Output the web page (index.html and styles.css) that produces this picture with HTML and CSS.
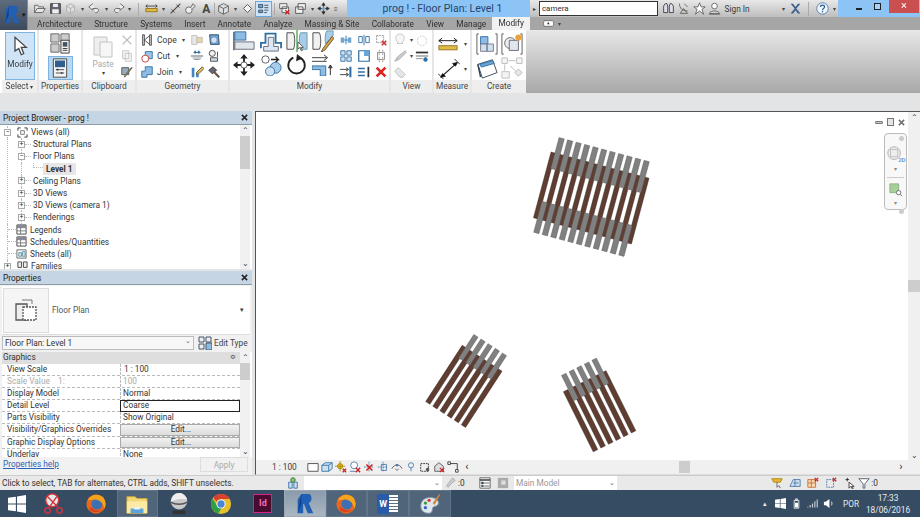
FILE: index.html
```html
<!DOCTYPE html>
<html lang="en">
<head>
<meta charset="utf-8">
<title>prog ! - Floor Plan: Level 1</title>
<link rel="stylesheet" href="styles.css">
</head>
<body>
<svg class="defs" width="0" height="0" aria-hidden="true">
<defs>
<symbol id="open" viewBox="0 0 16 16"><path d="M2 13V4h4l1 2h6v2M2 13l3-5h10l-3 5z" fill="#e6e6e6" stroke="#555"/></symbol>
<symbol id="save" viewBox="0 0 16 16"><path d="M2 2h12v12H2z" fill="#667" stroke="#333"/><path d="M5 2h6v4H5zM4 9h8v5H4z" fill="#eee"/></symbol>
<symbol id="sync" viewBox="0 0 16 16"><path d="M3 5l5-3 5 3v6l-5 3-5-3z" fill="#ddd" stroke="#aaa"/><path d="M3 5l5 3 5-3M8 8v6" fill="none" stroke="#aaa"/></symbol>
<symbol id="undo" viewBox="0 0 16 16"><path d="M6 2L1 6l5 4V8h4c2 0 3 1 3 2s-1 3-3 3h-1" fill="#eee" stroke="#555"/></symbol>
<symbol id="redo" viewBox="0 0 16 16"><path d="M10 2l5 4-5 4V8H6c-2 0-3 1-3 2s1 3 3 3h1" fill="#eee" stroke="#555"/></symbol>
<symbol id="dimq" viewBox="0 0 16 16"><path d="M1 5h14M3 3l-2 2 2 2M13 3l2 2-2 2" fill="none" stroke="#333"/><path d="M1 8h14v4H1z" fill="#e2b93b" stroke="#8a6d1a"/></symbol>
<symbol id="alignq" viewBox="0 0 16 16"><path d="M2 14L14 2" stroke="#444" stroke-width="1.4"/><path d="M3 9l4 4M9 3l4 4" stroke="#444"/></symbol>
<symbol id="tag" viewBox="0 0 16 16"><circle cx="6" cy="10" r="4" fill="#eee" stroke="#555"/><path d="M8 7l3-5 3 3-4 4" fill="#ddd" stroke="#555"/></symbol>
<symbol id="home" viewBox="0 0 16 16"><path d="M2 5l6-3 6 3v7l-6 3-6-3z" fill="#ddd" stroke="#555"/><path d="M2 5l6 3 6-3M8 8v7" fill="none" stroke="#555"/></symbol>
<symbol id="dia" viewBox="0 0 16 16"><path d="M8 3l5 5-5 5-5-5z" fill="#f3f3f3" stroke="#444"/></symbol>
<symbol id="thin" viewBox="0 0 16 16"><path d="M2 3h5v4H2zM2 10h5v3H2z" fill="#6aa5d6" stroke="#345"/><path d="M9 4h5M9 7h5M9 10h5M9 13h3" stroke="#333"/></symbol>
<symbol id="closeh" viewBox="0 0 16 16"><path d="M2 2h9v6H2zM5 6h8v7H5z" fill="#eee" stroke="#555"/><path d="M9 10l5 5m0-5l-5 5" stroke="#c22" stroke-width="1.6"/></symbol>
<symbol id="swin" viewBox="0 0 16 16"><path d="M5 2h9v7H5zM2 6h9v8H2z" fill="#f2f2f2" stroke="#444"/></symbol>
<symbol id="moveq" viewBox="0 0 16 16"><path d="M8 1v14M1 8h14M8 1L6 4h4zM8 15l-2-3h4zM1 8l3-2v4zM15 8l-3-2v4z" fill="#333" stroke="#333"/><circle cx="8" cy="8" r="2" fill="#6aa5d6"/></symbol>
<symbol id="arrow" viewBox="0 0 16 16"><path d="M4 1v11l3-2 2 5 2-1-2-5h4z" fill="#fff" stroke="#444"/></symbol>
<symbol id="props1" viewBox="0 0 24 24"><path d="M2 2h9v9H2zM13 2h9v9h-9zM2 13h9v9H2z" fill="#ccc" stroke="#666"/><path d="M13 9h9v14h-9z" fill="#f4f4f4" stroke="#333"/><path d="M15 11h5v5h-5z" fill="#456"/><path d="M15 18h5M15 20h5" stroke="#333"/></symbol>
<symbol id="props2" viewBox="0 0 24 24"><path d="M4 1h16v22H4z" fill="#f4f4f4" stroke="#333"/><path d="M6 3h12v8H6z" fill="#2f5f8f"/><path d="M7 14h10M7 18h10" stroke="#333"/><path d="M9 13v2M14 17v2" stroke="#333" stroke-width="2"/></symbol>
<symbol id="paste" viewBox="0 0 24 24"><path d="M3 3h13v18H3z" fill="#eee" stroke="#c4c4c4"/><path d="M9 8h12v15H9z" fill="#f6f6f6" stroke="#c4c4c4"/></symbol>
<symbol id="scis" viewBox="0 0 16 16"><path d="M3 3l10 10M13 3L3 13" stroke="#bbb" stroke-width="1.6"/></symbol>
<symbol id="copyg" viewBox="0 0 16 16"><path d="M3 2h7v9H3zM6 5h7v9H6z" fill="#f4f4f4" stroke="#c4c4c4"/></symbol>
<symbol id="match" viewBox="0 0 16 16"><path d="M2 3h8v8H2z" fill="#9ab" stroke="#555"/><path d="M14 3l-7 9-2 2 1-3 7-8z" fill="#cb4" stroke="#555"/></symbol>
<symbol id="cope" viewBox="0 0 16 16"><path d="M3 2h2v12H3zM11 2h2v12h-2z" fill="#ddd" stroke="#444"/><path d="M5 8l6-5M5 8l6 5" stroke="#444"/></symbol>
<symbol id="cut" viewBox="0 0 16 16"><path d="M6 3h8v8H6z" fill="#9cc4e6" stroke="#2f6fa5"/><circle cx="6" cy="11" r="4" fill="#fff" stroke="#b33"/></symbol>
<symbol id="join" viewBox="0 0 16 16"><path d="M6 2h8v9H8v3H2V7h4z" fill="#8fbce2" stroke="#2f6fa5"/></symbol>
<symbol id="g2" viewBox="0 0 16 16"><path d="M2 3h6v10H2z" fill="#e8e8e8" stroke="#bbb"/><path d="M8 5h6v6H8z" fill="#e3d9a8" stroke="#bbb"/></symbol>
<symbol id="g3" viewBox="0 0 16 16"><path d="M3 2h10l1 11H4z" fill="#6aa5d6" stroke="#345"/><circle cx="8" cy="8" r="3" fill="#dde"/></symbol>
<symbol id="g4" viewBox="0 0 16 16"><path d="M1 8h14M4 4h8M5 12h6" stroke="#456"/><path d="M6 2v3M10 2v3" stroke="#2f6fa5" stroke-width="2"/><path d="M3 9h10v3H3z" fill="#ccc"/></symbol>
<symbol id="g5" viewBox="0 0 16 16"><circle cx="6" cy="5" r="3.5" fill="#eee" stroke="#444"/><path d="M4 10h8v4H4z" fill="#cde" stroke="#444"/><path d="M12 3v6" stroke="#444"/></symbol>
<symbol id="g6" viewBox="0 0 16 16"><path d="M2 3h3v11H2zM7 8h3v6H7z" fill="#3f86c2"/><path d="M14 2L8 8l-1 3 3-1 6-6z" fill="#db5" stroke="#654"/></symbol>
<symbol id="g7" viewBox="0 0 16 16"><path d="M2 6l5-4 4 4-5 4z" fill="#667" stroke="#333"/><path d="M8 8l6 6" stroke="#654" stroke-width="2.4"/></symbol>
<symbol id="malign" viewBox="0 0 24 24"><path d="M1 2v20" stroke="#444" stroke-width="1.4"/><path d="M2 2h12v9H2z" fill="#8fbce2" stroke="#2f6fa5"/><path d="M2 13h21v8H2z" fill="#dfe6ec" stroke="#667"/></symbol>
<symbol id="moff" viewBox="0 0 24 24"><path d="M1 20v-6h5V4h11v10h6v6" fill="none" stroke="#2f6fa5" stroke-width="2"/><path d="M4 23v-5h5V8h6v10h5v5z" fill="#dbe8f3" stroke="#667"/></symbol>
<symbol id="mmir1" viewBox="0 0 24 24"><path d="M1 3h7c2 3 2 15 0 18H1z" fill="#f1f1f1" stroke="#444"/><path d="M23 3h-7c-2 3-2 15 0 18h7z" fill="#a8cbe8" stroke="#69a"/><path d="M12 0v24" stroke="#3a9a3a" stroke-width="1.3"/><path d="M13 13v8l2-2 2 4 1-1-2-3h3z" fill="#fff" stroke="#555"/></symbol>
<symbol id="mmir2" viewBox="0 0 24 24"><path d="M1 3h7c2 3 2 15 0 18H1z" fill="#f1f1f1" stroke="#444"/><path d="M23 1h-7c-2 3-2 10-1 14l8-9z" fill="#a8cbe8" stroke="#69a"/><path d="M22 7L12 20l-2 4 4-2L24 9z" fill="#d9a63a" stroke="#654"/></symbol>
<symbol id="mmove" viewBox="0 0 24 24"><path d="M12 2v20M2 12h20" stroke="#222" stroke-width="2"/><path d="M12 0L8 5h8zM12 24l-4-5h8zM0 12l5-4v8zM24 12l-5-4v8z" fill="#222"/><circle cx="12" cy="12" r="3.4" fill="#fff" stroke="#555"/></symbol>
<symbol id="mcopy" viewBox="0 0 24 24"><circle cx="6" cy="6" r="4" fill="#fff" stroke="#556"/><path d="M12 6h8l-3-3m3 3l-3 3" fill="none" stroke="#222" stroke-width="1.4"/><circle cx="17" cy="15" r="6" fill="#a8cbe8" stroke="#2f6fa5"/><circle cx="11" cy="19" r="5" fill="#cfe1f0" stroke="#2f6fa5"/></symbol>
<symbol id="mrot" viewBox="0 0 24 24"><path d="M15 4a9 9 0 1 1-7 0" fill="none" stroke="#222" stroke-width="2"/><path d="M12 0l6 5-7 3z" fill="#222"/></symbol>
<symbol id="mtrim" viewBox="0 0 24 24"><path d="M0 4h16M0 8h16M13 1l4 3-4 3" fill="none" stroke="#333"/><path d="M0 13h15v11H9V17H0z" fill="#8fbce2" stroke="#2f6fa5"/><path d="M20 23V12l-2 3h4l-2-3" stroke="#222" fill="none"/></symbol>
<symbol id="sm1" viewBox="0 0 16 16"><path d="M2 5h4v6H2zM10 5h4v6h-4z" fill="#6aa5d6"/><path d="M8 3v10M6 8h4" stroke="#2f6fa5"/></symbol>
<symbol id="sm2" viewBox="0 0 16 16"><path d="M2 4h4v7H2zM10 4h4v7h-4z" fill="#fff" stroke="#2f6fa5"/><path d="M8 2v12" stroke="#2f6fa5"/></symbol>
<symbol id="sm3" viewBox="0 0 16 16"><path d="M3 3h8v8H3z" fill="none" stroke="#888" stroke-dasharray="2 1"/><path d="M9 9l5 5m0-5l-5 5" stroke="#c33" stroke-width="1.8"/></symbol>
<symbol id="sm4" viewBox="0 0 16 16"><path d="M2 2h5v5H2zM9 2h5v5H9zM2 9h5v5H2zM9 9h5v5H9z" fill="#cfe1f0" stroke="#2f6fa5"/></symbol>
<symbol id="sm5" viewBox="0 0 16 16"><path d="M2 2h12v12H2z" fill="#fff" stroke="#2f6fa5" stroke-width="1.4"/><path d="M8 2h6v6H8z" fill="#6aa5d6"/></symbol>
<symbol id="sm6" viewBox="0 0 16 16"><path d="M4 4h8v8H4z" fill="none" stroke="#888"/><path d="M6 1v14M10 1v14" stroke="#888" stroke-dasharray="2 2"/></symbol>
<symbol id="sm7" viewBox="0 0 16 16"><path d="M1 5h9M1 11h9M8 3l3 2-3 2M8 9l3 2-3 2" fill="none" stroke="#333"/><path d="M13 2v12" stroke="#2f6fa5" stroke-width="2.4"/></symbol>
<symbol id="sm8" viewBox="0 0 16 16"><path d="M1 4h8M1 8h8M1 12h8" stroke="#2f6fa5" stroke-width="1.6"/><path d="M13 2v12" stroke="#333" stroke-width="2"/></symbol>
<symbol id="sm9" viewBox="0 0 16 16"><path d="M3 3l10 10m0-10L3 13" stroke="#d22" stroke-width="3"/></symbol>
<symbol id="bulb" viewBox="0 0 16 16"><path d="M8 1a5 5 0 0 0-3 9v2h6v-2a5 5 0 0 0-3-9z" fill="#f5f5f5" stroke="#c4c4c4"/></symbol>
<symbol id="cube" viewBox="0 0 16 16"><path d="M3 6l5-3 5 3v6l-5 3-5-3z" fill="none" stroke="#ccc" stroke-dasharray="2 1"/></symbol>
<symbol id="brush" viewBox="0 0 16 16"><path d="M14 2L5 9l-3 5 5-2 8-8z" fill="#ccc" stroke="#aaa"/></symbol>
<symbol id="lines" viewBox="0 0 16 16"><path d="M1 4h14" stroke="#333" stroke-width="2"/><path d="M1 8h14" stroke="#555"/><path d="M1 11h8" stroke="#888"/><circle cx="12" cy="12" r="2.5" fill="#2f6fa5"/></symbol>
<symbol id="eraser" viewBox="0 0 16 16"><path d="M2 7l4-4 8 8-3 3H8z" fill="#e6e6e6" stroke="#bbb"/></symbol>
<symbol id="ruler" viewBox="0 0 24 16"><path d="M1 4h22M5 1L1 4l4 3M19 1l4 3-4 3" fill="none" stroke="#222" stroke-width="1.2"/><path d="M1 10h22v5H1z" fill="#e0bb45" stroke="#8a6d1a"/></symbol>
<symbol id="ali" viewBox="0 0 24 24"><path d="M3 21L21 5" stroke="#222" stroke-width="1.2"/><path d="M0 17l6 6M18 1l6 6M3 21l5-1-3-3zM21 5l-5 1 3 3z" stroke="#222"/></symbol>
<symbol id="cr1" viewBox="0 0 24 24"><path d="M3 1H1v22h2M21 1h2v22h-2" fill="none" stroke="#555"/><path d="M5 4h8v8H5z" fill="#8fbce2" stroke="#2f6fa5"/><path d="M5 12h7v8H5zM12 12h7v8h-7z" fill="#cfe1f0" stroke="#778"/></symbol>
<symbol id="cr2" viewBox="0 0 24 24"><path d="M3 1H1v22h2M21 1h2v22h-2" fill="none" stroke="#555"/><circle cx="10" cy="11" r="6" fill="#eee" stroke="#666"/><path d="M9 8h10v11H9z" fill="#dfe6ec" stroke="#667"/><circle cx="19" cy="5" r="3.4" fill="#e8a33a"/></symbol>
<symbol id="cr3" viewBox="0 0 24 24"><path d="M2 8l16-5 5 14-16 6z" fill="#fff" stroke="#345"/><path d="M4 8l14-4 2 3-14 4z" fill="#6aa5d6" stroke="#2f6fa5"/><path d="M2 8l3 14" stroke="#345" stroke-width="1.6"/></symbol>
<symbol id="cr4" viewBox="0 0 24 24"><path d="M1 1h6v6H1zM17 1h6v6h-6zM1 16h8v7H1z" fill="#f5f5f5" stroke="#bbb"/><path d="M19 13l4 4-4 4-4-4z" fill="#e6e6e6" stroke="#bbb"/><path d="M8 4h8M4 8v7M10 10l6 5" stroke="#bbb"/></symbol>
<symbol id="x" viewBox="0 0 8 8"><path d="M1 1l6 6M7 1L1 7" stroke="#222" stroke-width="1.7"/></symbol>
<symbol id="views" viewBox="0 0 12 12"><path d="M1 4V1h3M8 1h3v3M11 8v3H8M4 11H1V8" fill="none" stroke="#333"/><path d="M4 4h4v4H4z" fill="#fff" stroke="#777"/></symbol>
<symbol id="tbl" viewBox="0 0 12 12"><path d="M1 1h10v10H1z" fill="#fff" stroke="#444"/><path d="M1 4h10M1 7.5h10M5 4v7" stroke="#777"/><path d="M1 1h10v3H1z" fill="#889"/></symbol>
<symbol id="sheet" viewBox="0 0 12 12"><path d="M1 2h10v9H1z" fill="#fff" stroke="#666"/><path d="M3 5h3v4H3zM7 4h3v5H7z" fill="#dde" stroke="#69a"/></symbol>
<symbol id="fam" viewBox="0 0 12 12"><path d="M1 1h4v6H1zM7 1h4v6H7z" fill="#eee" stroke="#444"/></symbol>
<symbol id="fp" viewBox="0 0 24 24"><path d="M2 6h11v16H2z" fill="#eee" stroke="#555" stroke-width="1.3"/><path d="M8 2h10v4" fill="none" stroke="#777"/><path d="M9 9h13v13H9z" fill="#fff" stroke="#555" stroke-width="1.3" stroke-dasharray="2 1"/></symbol>
<symbol id="edit" viewBox="0 0 14 14"><path d="M1 1h5v5H1zM8 1h5v5H8zM1 8h5v5H1z" fill="#eee" stroke="#456"/><path d="M8 7h6v7H8z" fill="#8fbce2" stroke="#456"/></symbol>
<symbol id="wheel" viewBox="0 0 20 20"><circle cx="9" cy="9" r="7" fill="#eee" stroke="#aaa"/><path d="M5 5h8v8H5z" fill="none" stroke="#bbb"/></symbol>
<symbol id="zoomg" viewBox="0 0 16 16"><path d="M1 1h10v10H1z" fill="#a7cf9a" stroke="#8ab07e"/><circle cx="11" cy="11" r="2.5" fill="#fff" stroke="#666"/><path d="M13 13l2 2" stroke="#666"/></symbol>
<symbol id="v1" viewBox="0 0 14 14"><path d="M1 3h12v9H1z" fill="#fff" stroke="#444"/></symbol>
<symbol id="v2" viewBox="0 0 14 14"><path d="M1 5l4-3h8v7l-4 3H1z" fill="#cfe1f0" stroke="#2f6fa5"/><path d="M1 5h8v7M9 5l4-3" fill="none" stroke="#2f6fa5"/></symbol>
<symbol id="v3" viewBox="0 0 14 14"><circle cx="6" cy="6" r="3" fill="#f0c030" stroke="#a80"/><path d="M6 0v12M0 6h12" stroke="#a80"/><path d="M9 9l4 4m0-4l-4 4" stroke="#c22" stroke-width="1.6"/></symbol>
<symbol id="v4" viewBox="0 0 14 14"><circle cx="6" cy="5" r="4" fill="#fff" stroke="#47a"/><path d="M1 12h7" stroke="#47a"/><path d="M8 8l5 5m0-5l-5 5" stroke="#c22" stroke-width="1.6"/></symbol>
<symbol id="v5" viewBox="0 0 14 14"><path d="M1 7h12M7 1v12" stroke="#47a" stroke-dasharray="2 1"/><path d="M4 4l7 7m0-7l-7 7" stroke="#c22" stroke-width="1.8"/></symbol>
<symbol id="v6" viewBox="0 0 14 14"><path d="M1 7h12M7 1v12" stroke="#47a" stroke-dasharray="2 1"/><path d="M5 4h6v7H5z" fill="none" stroke="#47a"/></symbol>
<symbol id="v7" viewBox="0 0 14 14"><path d="M1 9c3-6 9-6 12 0M5 9l2 2 2-2" fill="none" stroke="#555"/><circle cx="7" cy="5" r="1.4" fill="#47a"/></symbol>
<symbol id="v8" viewBox="0 0 14 14"><circle cx="7" cy="5" r="3" fill="none" stroke="#47a"/><path d="M7 8v4" stroke="#47a"/></symbol>
<symbol id="v9" viewBox="0 0 14 14"><path d="M2 3h9v9H2z" fill="none" stroke="#222" stroke-dasharray="2 1"/><circle cx="10" cy="10" r="2" fill="#555"/></symbol>
<symbol id="v10" viewBox="0 0 14 14"><path d="M2 6l5-4 5 4v6H2z" fill="#ddd" stroke="#555"/><path d="M8 8l5 5m0-5l-5 5" stroke="#c22" stroke-width="1.4"/></symbol>
<symbol id="v11" viewBox="0 0 14 14"><path d="M2 3h10v10" fill="none" stroke="#333"/><path d="M1 1h3v3H1zM10 10h3v3h-3z" fill="#fff" stroke="#333"/></symbol>
<symbol id="work" viewBox="0 0 14 14"><path d="M2 6h4v7H2zM8 6h4v7H8z" fill="#cfe1f0" stroke="#2f6fa5"/><circle cx="7" cy="3.5" r="2.6" fill="#8c6" stroke="#364"/></symbol>
<symbol id="pin" viewBox="0 0 14 14"><path d="M10 1l3 3-5 4-3 4-2-2 3-4zM3 12l2-2" fill="#ccc" stroke="#aaa"/></symbol>
<symbol id="dset" viewBox="0 0 14 14"><path d="M1 1h12v12H1z" fill="#fff" stroke="#555"/><path d="M1 3.500h12" stroke="#555" stroke-width="2"/><path d="M3 6h2v2H3zM3 10h2v1H3zM6 7h6M6 10.500h6" stroke="#456"/></symbol>
<symbol id="dset2" viewBox="0 0 14 14"><path d="M1 1h12v12H1z" fill="#aaa"/><path d="M5 4h5v5H5z" fill="#ddd"/></symbol>
<symbol id="f1" viewBox="0 0 14 14"><path d="M1 2h12l-2 4H3z" fill="#e8b53a" stroke="#a80"/><path d="M7 6v6l2-2 2 3" fill="#fff" stroke="#555"/></symbol>
<symbol id="f2" viewBox="0 0 14 14"><path d="M1 11l4-8h8v8z" fill="#cfe1f0" stroke="#47a"/><path d="M5 7h6M7 3v8" stroke="#47a"/></symbol>
<symbol id="f3" viewBox="0 0 14 14"><path d="M1 3h9v9H1z" fill="#f3dcb0" stroke="#c63"/><path d="M1 7h9M5 3v9" stroke="#c63"/><path d="M9 1l4 4m0-4l-4 4" stroke="#c22" stroke-width="1.5"/></symbol>
<symbol id="f4" viewBox="0 0 14 14"><path d="M2 3h8v9H2z" fill="none" stroke="#47a" stroke-dasharray="2 1"/><path d="M9 1l4 4m0-4l-4 4" stroke="#c22" stroke-width="1.5"/></symbol>
<symbol id="f5" viewBox="0 0 14 14"><path d="M3 3h4M5 1v4" stroke="#222"/><path d="M7 6v7l2-2 2 3 1-1-2-2h3z" fill="#fff" stroke="#333"/></symbol>
<symbol id="f6" viewBox="0 0 14 14"><path d="M1 2h12L8 8v5H6V8z" fill="#fff" stroke="#456"/></symbol>
<symbol id="win" viewBox="0 0 16 16"><path d="M0 2.500L7 1.500v6H0zM8 1.300L16 0v7.500H8zM0 8.500h7v6l-7-1zM8 8.500h8V16l-8-1.300z" fill="#fff"/></symbol>
<symbol id="snip" viewBox="0 0 24 24"><circle cx="10" cy="8" r="7" fill="#e8e8e8" stroke="#d33" stroke-width="1.4"/><path d="M4 3l13 13M15 4L6 17" stroke="#c34" stroke-width="1.5"/><circle cx="18" cy="19" r="3" fill="none" stroke="#c34" stroke-width="1.6"/><circle cx="5" cy="19" r="3" fill="none" stroke="#c34" stroke-width="1.6"/></symbol>
<symbol id="ff" viewBox="0 0 24 24"><circle cx="12" cy="12" r="10.500" fill="#e8671f"/><circle cx="13" cy="12" r="6" fill="#3d6fb4"/><path d="M3 8c3-7 12-8 17-3 3 4 3 9 1 12-1-6-5-10-10-10-3 0-6 1-8 1z" fill="#f7a41d"/><path d="M5 18c3 4 10 4 14 0-4 2-10 1-13-3z" fill="#d8421c"/></symbol>
<symbol id="expl" viewBox="0 0 24 24"><path d="M1 4h9l2 2h11v16H1z" fill="#f3d774" stroke="#c9a53a"/><path d="M1 9h22v13H1z" fill="#fbe9a4"/><path d="M5 17h14v5H5z" fill="#5ba3d9"/><path d="M9 15h6v3H9z" fill="#e9f3fb"/></symbol>
<symbol id="ball" viewBox="0 0 24 24"><circle cx="12" cy="9" r="9" fill="#c9c9c9"/><path d="M3 10c5-4 13-4 18-3-2-5-6-7-9-7C7 0 4 4 3 10z" fill="#eee"/><path d="M3 10c5 3 13 3 18 0" fill="none" stroke="#555" stroke-width="1.6"/><path d="M5 19h14v4H5z" fill="#333"/></symbol>
<symbol id="chrome" viewBox="0 0 24 24"><circle cx="12" cy="12" r="11" fill="#e8c02c"/><path d="M12 1a11 11 0 0 1 9.500 5.500H12a5.500 5.500 0 0 0-5 3L3.500 5A11 11 0 0 1 12 1z" fill="#d9402f"/><path d="M2.800 6a11 11 0 0 0 6 16.500l4-6.500a5.500 5.500 0 0 1-5.500-3z" fill="#2f9e47"/><circle cx="12" cy="12" r="5" fill="#fff"/><circle cx="12" cy="12" r="4" fill="#4a86d8"/></symbol>
<symbol id="revit" viewBox="0 0 24 24"><path d="M8 1h9c3 3 3 8-1 10l5 11h-6l-4-10h-1v10H4V7z" fill="#1f5fb4"/><path d="M4 22l4-21v11z" fill="#123f82"/></symbol>
<symbol id="bino" viewBox="0 0 16 16"><path d="M2 5l2-3h2l1 3v8H2zM14 5l-2-3h-2L9 5v8h5z" fill="#dde" stroke="#333"/></symbol>
<symbol id="paint" viewBox="0 0 24 24"><path d="M2 14c0-6 5-9 10-9 6 0 10 3 9 7-1 3-5 2-6 4-1 3 0 6-5 6-5 0-8-3-8-8z" fill="#dfe6ec" stroke="#8a9aa8"/><circle cx="7" cy="11" r="1.800" fill="#3a9a3a"/><circle cx="11" cy="8" r="1.800" fill="#d33"/><circle cx="7" cy="16" r="1.800" fill="#36c"/><path d="M22 1l-7 10 2 2 6-11z" fill="#c9883a"/></symbol>
<symbol id="sat" viewBox="0 0 16 16"><path d="M3 2c0 6 4 9 10 9M4 14h9L8 8z" fill="none" stroke="#555"/><path d="M9 2l4 4" stroke="#555"/></symbol>
<symbol id="star" viewBox="0 0 16 16"><path d="M8 1l2 5h5l-4 3 2 6-5-4-5 4 2-6-4-3h5z" fill="#fff" stroke="#555"/></symbol>
<symbol id="user" viewBox="0 0 16 16"><circle cx="8" cy="5" r="3.500" fill="#fff" stroke="#555"/><path d="M2 14c1-4 11-4 12 0zM1 15h14" fill="#ddd" stroke="#555"/></symbol>
<symbol id="xch" viewBox="0 0 16 16"><path d="M2 2l5 6-5 6h3l3-4 3 4h3L9 8l5-6h-3L8 6 5 2z" fill="#3a5f8f"/></symbol>
<symbol id="help" viewBox="0 0 16 16"><circle cx="8" cy="8" r="7" fill="#f3f7fb" stroke="#3a6fa5"/><path d="M5.500 6c0-3 5-3 5 0 0 2-2.500 2-2.500 4" fill="none" stroke="#2a5f95" stroke-width="1.5"/><circle cx="8" cy="12" r="1" fill="#2a5f95"/></symbol>
<symbol id="ribctl" viewBox="0 0 16 10"><path d="M1 1h12c2 0 2 8 0 8H1c-1-2-1-6 0-8z" fill="#fff" stroke="#555"/><path d="M5 6l2-3 2 3z" fill="#333"/></symbol>
<symbol id="batt" viewBox="0 0 12 14"><path d="M3 3h6v10H3zM5 1h2v2H5z" fill="none" stroke="#fff"/><path d="M4 6h4v6H4z" fill="#fff"/></symbol>
<symbol id="sig" viewBox="0 0 14 12"><path d="M1 11v-1M4 11V8M7 11V6M10 11V3M13 11V1" stroke="#fff" stroke-opacity=".75" stroke-width="1.400"/></symbol>
<symbol id="spk" viewBox="0 0 12 12"><path d="M1 4h2l4-3v10L3 8H1z" fill="#fff"/><path d="M9 4c1 1 1 3 0 4" fill="none" stroke="#fff"/></symbol>
</defs>
</svg>

<div class="app">
  <header class="head">
    <div class="logo"><svg class="i-logo"><use href="#revit"/></svg><span class="logo-dd">▾</span></div>
    <div class="head-main">
      <div class="top">
        <div class="qat">
          <svg class="q"><use href="#open"/></svg>
          <svg class="q"><use href="#save"/></svg>
          <svg class="q"><use href="#sync"/></svg>
          <span class="dd">▾</span>
          <svg class="q"><use href="#undo"/></svg>
          <span class="dd">▾</span>
          <svg class="q"><use href="#redo"/></svg>
          <span class="dd">▾</span>
          <i class="qsep qsep-a"></i>
          <svg class="q"><use href="#dimq"/></svg>
          <span class="dd">▾</span>
          <svg class="q"><use href="#alignq"/></svg>
          <svg class="q"><use href="#tag"/></svg>
          <span class="qa-a">A</span>
          <i class="qsep qsep-b"></i>
          <svg class="q"><use href="#home"/></svg>
          <span class="dd">▾</span>
          <svg class="q"><use href="#dia"/></svg>
          <span class="q-on"><svg class="q"><use href="#thin"/></svg></span>
          <i class="qsep"></i>
          <svg class="q"><use href="#closeh"/></svg>
          <svg class="q"><use href="#swin"/></svg>
          <span class="dd">▾</span>
          <svg class="q"><use href="#moveq"/></svg>
          <span class="dd">≡</span>
        </div>
        <div class="title">prog ! - Floor Plan: Level 1</div>
        <div class="infobar">
          <span class="ib-arrow">▸</span>
          <span class="search">camera</span>
          <svg class="q"><use href="#bino"/></svg>
          <svg class="q"><use href="#sat"/></svg>
          <svg class="q"><use href="#star"/></svg>
          <svg class="q"><use href="#user"/></svg>
          <span class="signin">Sign In</span>
          <span class="dd">▾</span>
          <svg class="q"><use href="#xch"/></svg>
          <i class="ib-sep"></i>
          <svg class="q"><use href="#help"/></svg>
          <span class="dd">▾</span>
        </div>
        <div class="winctl">
          <span class="w-min"></span>
          <span class="w-max"></span>
          <span class="w-close">×</span>
        </div>
      </div>
      <nav class="tabs">
        <span>Architecture</span><span>Structure</span><span>Systems</span><span>Insert</span><span>Annotate</span><span>Analyze</span><span>Massing &amp; Site</span><span>Collaborate</span><span>View</span><span>Manage</span><span class="tab-on">Modify</span>
        <svg class="ribctl"><use href="#ribctl"/></svg><span class="dd">▾</span>
      </nav>
    </div>
  </header>

  <section class="ribbon">
    <div class="panel p-select">
      <div class="pbody"><div class="modify-btn"><svg class="i20"><use href="#arrow"/></svg><span>Modify</span></div></div>
      <div class="plabel">Select <span class="dd">▾</span></div>
    </div>
    <div class="panel p-props">
      <div class="pbody col-c">
        <svg class="i22"><use href="#props1"/></svg>
        <span class="props-on"><svg class="i20"><use href="#props2"/></svg></span>
      </div>
      <div class="plabel">Properties</div>
    </div>
    <div class="panel p-clip">
      <div class="pbody clip">
        <div class="paste"><svg class="i24"><use href="#paste"/></svg><span>Paste</span><span class="dd">▾</span></div>
        <div class="stack">
          <svg class="i14"><use href="#scis"/></svg>
          <svg class="i14"><use href="#copyg"/></svg>
          <svg class="i14"><use href="#match"/></svg>
        </div>
      </div>
      <div class="plabel">Clipboard</div>
    </div>
    <div class="panel p-geo">
      <div class="pbody geo">
        <div class="ln"><svg class="i14"><use href="#cope"/></svg>Cope <span class="dd">▾</span></div>
        <svg class="i14"><use href="#g2"/></svg>
        <svg class="i14"><use href="#g3"/></svg>
        <div class="ln"><svg class="i14"><use href="#cut"/></svg>Cut <span class="dd">▾</span></div>
        <svg class="i14"><use href="#g4"/></svg>
        <svg class="i14"><use href="#g5"/></svg>
        <div class="ln"><svg class="i14"><use href="#join"/></svg>Join <span class="dd">▾</span></div>
        <svg class="i14"><use href="#g6"/></svg>
        <svg class="i14"><use href="#g7"/></svg>
      </div>
      <div class="plabel">Geometry</div>
    </div>
    <div class="panel p-mod">
      <div class="pbody mod">
        <div class="mod-big">
          <svg class="i22"><use href="#malign"/></svg>
          <svg class="i22"><use href="#moff"/></svg>
          <svg class="i22"><use href="#mmir1"/></svg>
          <svg class="i22"><use href="#mmir2"/></svg>
          <svg class="i22"><use href="#mmove"/></svg>
          <svg class="i22"><use href="#mcopy"/></svg>
          <svg class="i22"><use href="#mrot"/></svg>
          <svg class="i22"><use href="#mtrim"/></svg>
        </div>
        <div class="mod-small">
          <svg class="i14"><use href="#sm1"/></svg>
          <svg class="i14"><use href="#sm2"/></svg>
          <svg class="i14"><use href="#sm3"/></svg>
          <svg class="i14"><use href="#sm4"/></svg>
          <svg class="i14"><use href="#sm5"/></svg>
          <svg class="i14"><use href="#sm6"/></svg>
          <svg class="i14"><use href="#sm7"/></svg>
          <svg class="i14"><use href="#sm8"/></svg>
          <svg class="i14"><use href="#sm9"/></svg>
        </div>
      </div>
      <div class="plabel">Modify</div>
    </div>
    <div class="panel p-view">
      <div class="pbody vw">
        <div class="ln2"><svg class="i14"><use href="#bulb"/></svg><span class="dd">▾</span></div>
        <svg class="i14"><use href="#cube"/></svg>
        <div class="ln2"><svg class="i14"><use href="#brush"/></svg><span class="dd">▾</span></div>
        <svg class="i14"><use href="#lines"/></svg>
        <div class="ln2"><svg class="i14"><use href="#eraser"/></svg></div>
      </div>
      <div class="plabel">View</div>
    </div>
    <div class="panel p-meas">
      <div class="pbody meas">
        <div class="ln3"><svg class="i-ruler"><use href="#ruler"/></svg><span class="dd">▾</span></div>
        <div class="ln3"><svg class="i22"><use href="#ali"/></svg><span class="dd">▾</span></div>
      </div>
      <div class="plabel">Measure</div>
    </div>
    <div class="panel p-create">
      <div class="pbody create">
        <svg class="i22"><use href="#cr1"/></svg>
        <svg class="i22"><use href="#cr2"/></svg>
        <svg class="i22"><use href="#cr3"/></svg>
        <svg class="i22"><use href="#cr4"/></svg>
      </div>
      <div class="plabel">Create</div>
    </div>
    <div class="ribbon-rest"></div>
  </section>
  <div class="optbar"></div>

  <main class="work">
    <aside class="side">
      <section class="browser">
        <div class="ph"><span>Project Browser - prog !</span><svg class="i-x"><use href="#x"/></svg></div>
        <div class="browser-body">
          <div class="tree">
            <div class="t-row t-0"><b class="exp">−</b><svg class="i11"><use href="#views"/></svg>Views (all)</div>
            <div class="t-nest">
              <div class="t-row"><b class="exp">+</b><i class="dash"></i>Structural Plans</div>
              <div class="t-row"><b class="exp">−</b><i class="dash"></i>Floor Plans</div>
              <div class="t-row t-level"><i class="dash-l"></i><strong>Level 1</strong></div>
              <div class="t-row"><b class="exp">+</b><i class="dash"></i>Ceiling Plans</div>
              <div class="t-row"><b class="exp">+</b><i class="dash"></i>3D Views</div>
              <div class="t-row"><b class="exp">+</b><i class="dash"></i>3D Views (camera 1)</div>
              <div class="t-row"><b class="exp">+</b><i class="dash"></i>Renderings</div>
            </div>
            <div class="t-row t-0"><i class="dash-s"></i><svg class="i11"><use href="#tbl"/></svg>Legends</div>
            <div class="t-row t-0"><i class="dash-s"></i><svg class="i11"><use href="#tbl"/></svg>Schedules/Quantities</div>
            <div class="t-row t-0"><i class="dash-s"></i><svg class="i11"><use href="#sheet"/></svg>Sheets (all)</div>
            <div class="t-row t-0"><b class="exp">+</b><svg class="i11"><use href="#fam"/></svg>Families</div>
          </div>
          <div class="vs vs-tree"><span class="vs-a">⌃</span><span class="vs-t"></span><span class="vs-a">⌄</span></div>
        </div>
      </section>
      <section class="props">
        <div class="ph"><span>Properties</span><svg class="i-x"><use href="#x"/></svg></div>
        <div class="typesel">
          <div class="thumb"><svg class="i24"><use href="#fp"/></svg></div>
          <span class="type-name">Floor Plan</span>
          <span class="type-dd">▾</span>
        </div>
        <div class="inst">
          <div class="combo">Floor Plan: Level 1<span class="chev">⌄</span></div>
          <div class="edittype"><svg class="i14"><use href="#edit"/></svg>Edit Type</div>
        </div>
        <div class="ptable-wrap">
          <div class="ptable">
            <div class="gr-head">Graphics<span class="gr-c">≎</span></div>
            <div class="r"><span>View Scale</span><span class="indent">1 : 100</span></div>
            <div class="r mute"><span>Scale Value &nbsp;&nbsp; 1:</span><span>100</span></div>
            <div class="r"><span>Display Model</span><span>Normal</span></div>
            <div class="r"><span>Detail Level</span><span class="active">Coarse</span></div>
            <div class="r"><span>Parts Visibility</span><span>Show Original</span></div>
            <div class="r"><span>Visibility/Graphics Overrides</span><span class="btn">Edit...</span></div>
            <div class="r"><span>Graphic Display Options</span><span class="btn">Edit...</span></div>
            <div class="r"><span>Underlay</span><span>None</span></div>
          </div>
          <div class="vs vs-prop"><span class="vs-a">⌃</span><span class="vs-t"></span><span class="vs-a">⌄</span></div>
        </div>
        <div class="pfoot"><a class="link">Properties help</a><span class="apply">Apply</span></div>
      </section>
    </aside>

    <section class="canvas">
      <div class="drawing">
        <svg class="plan" viewBox="256 112 652 346">
          <defs>
            <rect id="bt" x="-2.300" y="-33" width="4.600" height="68"/>
            <g id="gt"><rect x="-2.700" y="-49" width="5.400" height="32"/><rect x="-2.700" y="17" width="5.400" height="32"/></g>
            <rect id="bs" x="-2.500" y="0" width="5" height="67"/>
            <rect id="gs" x="-2.500" y="-15.500" width="5" height="28"/>
          </defs>
          <g transform="translate(591.500 197) rotate(15)">
            <g class="brown">
              <use href="#bt" x="-48.400"/><use href="#bt" x="-39.600"/><use href="#bt" x="-30.800"/><use href="#bt" x="-22"/><use href="#bt" x="-13.200"/><use href="#bt" x="-4.400"/><use href="#bt" x="4.400"/><use href="#bt" x="13.200"/><use href="#bt" x="22"/><use href="#bt" x="30.800"/><use href="#bt" x="39.600"/><use href="#bt" x="48.400"/>
            </g>
            <g class="gray">
              <use href="#gt" x="-44"/><use href="#gt" x="-35.200"/><use href="#gt" x="-26.400"/><use href="#gt" x="-17.600"/><use href="#gt" x="-8.800"/><use href="#gt" x="0"/><use href="#gt" x="8.800"/><use href="#gt" x="17.600"/><use href="#gt" x="26.400"/><use href="#gt" x="35.200"/><use href="#gt" x="44"/>
            </g>
          </g>
          <g transform="translate(464.300 346.700) rotate(33)">
            <g class="brown"><use href="#bs" x="0"/><use href="#bs" x="8.500"/><use href="#bs" x="17"/><use href="#bs" x="25.500"/><use href="#bs" x="34"/><use href="#bs" x="42.500"/></g>
            <g class="gray"><use href="#gs" x="3.800"/><use href="#gs" x="12.300"/><use href="#gs" x="20.800"/><use href="#gs" x="29.300"/><use href="#gs" x="37.800"/></g>
          </g>
          <g transform="translate(565.700 390.700) rotate(-26.400)">
            <g class="brown"><use href="#bs" x="0"/><use href="#bs" x="8.500"/><use href="#bs" x="17"/><use href="#bs" x="25.500"/><use href="#bs" x="34"/><use href="#bs" x="42.500"/></g>
            <g class="gray"><use href="#gs" x="5.500"/><use href="#gs" x="14"/><use href="#gs" x="22.500"/><use href="#gs" x="31"/><use href="#gs" x="39.500"/></g>
          </g>
        </svg>
        <div class="viewctl"><i class="vc-min"></i><i class="vc-max"></i><svg class="i-x2"><use href="#x"/></svg></div>
        <div class="navbar">
          <i class="nav-dot"></i>
          <span class="nav-wheel"><svg class="i18"><use href="#wheel"/></svg><em>2D</em></span>
          <span class="dd">▾</span>
          <i class="nav-sep"></i>
          <svg class="i14"><use href="#zoomg"/></svg>
          <span class="dd">▾</span>
          <i class="nav-dot nav-end"></i>
        </div>
      </div>
      <div class="vscroll"><span class="vsc-a">⌃</span><span class="vsc-t"></span><span class="vsc-a">⌄</span></div>
      <div class="viewbar">
        <span class="scale">1 : 100</span>
        <svg class="i12"><use href="#v1"/></svg>
        <svg class="i12"><use href="#v2"/></svg>
        <svg class="i12"><use href="#v3"/></svg>
        <svg class="i12"><use href="#v4"/></svg>
        <svg class="i12"><use href="#v5"/></svg>
        <svg class="i12"><use href="#v6"/></svg>
        <svg class="i12"><use href="#v7"/></svg>
        <svg class="i12"><use href="#v8"/></svg>
        <svg class="i12"><use href="#v9"/></svg>
        <svg class="i12"><use href="#v10"/></svg>
        <svg class="i12"><use href="#v11"/></svg>
        <span class="hs"><span class="hs-a">‹</span><span class="hs-t"></span><span class="hs-a">›</span></span>
      </div>
      <div class="corner"></div>
    </section>
  </main>

  <footer class="status">
    <span class="st-text">Click to select, TAB for alternates, CTRL adds, SHIFT unselects.</span>
    <svg class="i12"><use href="#work"/></svg>
    <span class="st-combo st-c1"><span class="chev">⌄</span></span>
    <svg class="i12"><use href="#pin"/></svg>
    <span class="st-zero">:0</span>
    <svg class="i12 st-d"><use href="#dset"/></svg>
    <svg class="i12"><use href="#dset2"/></svg>
    <span class="st-combo st-c2">Main Model<span class="chev">⌄</span></span>
    <span class="st-right">
      <svg class="i12"><use href="#f1"/></svg>
      <svg class="i12"><use href="#f2"/></svg>
      <svg class="i12"><use href="#f3"/></svg>
      <svg class="i12"><use href="#f4"/></svg>
      <svg class="i12"><use href="#f5"/></svg>
      <svg class="i12 st-f6"><use href="#f6"/></svg>
      <span>:0</span>
    </span>
  </footer>

  <div class="taskbar">
    <span class="tb-start"><svg class="i18"><use href="#win"/></svg></span>
    <span class="tb"><svg class="i22"><use href="#snip"/></svg></span>
    <span class="tb"><svg class="i22"><use href="#ff"/></svg></span>
    <span class="tb on"><svg class="i22"><use href="#expl"/></svg></span>
    <span class="tb"><svg class="i22"><use href="#ball"/></svg></span>
    <span class="tb"><svg class="i22"><use href="#chrome"/></svg></span>
    <span class="tb"><span class="indd">Id</span></span>
    <span class="tb cur"><svg class="i22"><use href="#revit"/></svg></span>
    <span class="tb on"><svg class="i22"><use href="#ff"/></svg></span>
    <span class="tb on"><span class="wordi"><span class="w-l">W</span><span class="w-r"></span></span></span>
    <span class="tb on"><svg class="i22"><use href="#paint"/></svg></span>
    <span class="tray">
      <span class="tr-up">▴</span>
      <svg class="i11"><use href="#win"/></svg>
      <svg class="i11"><use href="#batt"/></svg>
      <svg class="i11"><use href="#sig"/></svg>
      <svg class="i11"><use href="#spk"/></svg>
      <span class="por">POR</span>
      <span class="clock"><span>17:33</span><span>18/06/2016</span></span>
    </span>
  </div>
</div>
</body>
</html>
```

FILE: styles.css
```css
* { box-sizing: border-box; }
html, body { margin: 0; padding: 0; }
body { width: 920px; height: 517px; overflow: hidden; background: #e3e4e5; font-family: Roboto, "Noto Sans", sans-serif; font-size: 8.300px; color: #3a3a3a; }
.defs { position: absolute; }
svg { display: block; flex: none; }
.app { width: 920px; height: 517px; display: flex; flex-direction: column; filter: blur(.35px); }
.i11 { width: 11px; height: 11px; }
.i12 { width: 12px; height: 12px; }
.i14 { width: 14px; height: 14px; }
.i16 { width: 16px; height: 16px; }
.i18 { width: 18px; height: 18px; }
.i20 { width: 20px; height: 20px; }
.i22 { width: 22px; height: 22px; }
.i24 { width: 24px; height: 24px; }
.dd { font-size: 6px; color: #444; line-height: 1; width: 8px; text-align: center; flex: none; }

/* head */
.head { height: 30px; display: flex; background: #a6a6a6; flex: none; }
.logo { width: 28px; height: 30px; background: linear-gradient(#5d6b7e, #3e4a5c); border-right: 1px solid #888; display: flex; align-items: center; padding-left: 2px; }
.i-logo { width: 20px; height: 24px; }
.logo-dd { color: #111; font-size: 7px; }
.head-main { flex: 1; min-width: 0; display: flex; flex-direction: column; }
.top { height: 17px; display: flex; }
.qat { width: 319px; padding-left: 4px; display: flex; align-items: center; background: linear-gradient(#ededed, #b9b9b9); }
.q { width: 13px; height: 13px; margin: 0 1.300px; }
.qsep { width: 1px; height: 12px; background: #aaa; margin: 0 2px; }
.qsep-a { margin: 0 4.500px; }
.qsep-b { margin: 0 .500px; }
.qa-a { width: 15px; text-align: center; font-size: 12px; font-weight: 700; color: #444; line-height: 1; }
.q-on { background: #cfe4f7; border: 1px solid #6ea6d6; width: 17px; height: 16px; display: flex; align-items: center; justify-content: center; }
.title { width: 183px; background: #8cc4f5; color: #27456a; font-size: 10.500px; display: flex; align-items: center; justify-content: center; padding-left: 8px; }
.infobar { width: 308px; display: flex; align-items: center; background: linear-gradient(#e8e8e8, #bdbdbd); }
.ib-arrow { width: 9px; font-size: 6px; text-align: center; }
.search { width: 121px; height: 15px; background: #fff; border: 1px solid #333; padding-left: 2px; line-height: 13px; color: #333; font-size: 8px; margin-right: 2px; }
.signin { width: 56px; margin-left: 2px; }
.ib-sep { width: 1px; height: 14px; background: #aaa; margin: 0 5px; }
.winctl { flex: 1; background: #8cc4f5; display: flex; padding-left: 18px; }
.w-min { width: 6px; height: 2px; background: #222; margin: 8px 12px 0 0; }
.w-max { width: 7px; height: 7px; border: 1px solid #222; background: #a8d2f7; margin: 3px 8px 0 0; }
.w-close { width: 30px; height: 13px; background: #c9504f; color: #fff; font-size: 11px; line-height: 12px; text-align: center; }
.tabs { height: 13px; display: flex; align-items: center; gap: 12.200px; padding-left: 9px; color: #303030; }
.tab-on { background: #f1f1f1; height: 13px; line-height: 13px; padding: 0 6px; margin: 0 -6px; }
.ribctl { width: 14px; height: 7px; margin-left: 6px; }
.tabs .dd { margin-left: -13px; }

/* ribbon */
.ribbon { height: 63px; display: flex; flex: none; background: #fff; }
.panel { display: flex; flex-direction: column; border-right: 2px solid #e6e6e6; background: #fff; flex: none; }
.pbody { height: 50px; padding-top: 2px; }
.plabel { height: 13px; line-height: 13px; background: #eeeeee; text-align: center; color: #444; }
.plabel .dd { display: inline-block; width: auto; }
.p-select { width: 39px; padding-left: 2px; }
.p-props { width: 44px; }
.p-clip { width: 54px; }
.p-geo { width: 93px; }
.p-mod { width: 161px; }
.p-view { width: 43px; }
.p-meas { width: 38px; }
.p-create { width: 54px; border-right: 0; }
.ribbon-rest { flex: 1; background: linear-gradient(#e6e6e6, #a8a8a8); border-top: 1px solid #e8e8e8; }
.modify-btn { margin-left: 3px; width: 30px; height: 48px; background: #cfe4f7; border: 1px solid #7fb2dc; display: flex; flex-direction: column; align-items: center; padding-top: 3px; gap: 3px; }
.col-c { display: flex; flex-direction: column; align-items: center; gap: 2px; }
.props-on { width: 25px; height: 24px; background: #b9d9f3; border: 1px solid #7fb2dc; display: flex; align-items: center; justify-content: center; }
.clip { display: flex; padding-left: 4px; }
.paste { width: 33px; display: flex; flex-direction: column; align-items: center; color: #aaa; padding-top: 2px; gap: 1px; }
.stack { display: grid; grid-auto-rows: 16px; place-items: center; width: 16px; }
.geo { display: grid; grid-template-columns: 50px 17px 17px; grid-auto-rows: 16px; place-items: center; padding-left: 1px; }
.ln { display: flex; align-items: center; gap: 3px; justify-self: start; padding-left: 2px; font-size: 8.500px; }
.mod { display: flex; }
.mod-big { width: 106px; display: grid; grid-template-columns: 27px 27px 25px 27px; grid-template-rows: 18px 30px; place-items: center; }
.mod-small { display: grid; grid-template-columns: 19px 17px 17px; grid-auto-rows: 16px; place-items: center; }
.vw { display: grid; grid-template-columns: 20px 22px; grid-auto-rows: 16px; place-items: center; }
.ln2 { display: flex; align-items: center; justify-self: start; padding-left: 2px; }
.meas { display: flex; flex-direction: column; gap: 4px; padding-top: 3px; }
.ln3 { display: flex; align-items: center; height: 22px; padding-left: 4px; }
.i-ruler { width: 20px; height: 14px; }
.ln3 .i-ruler + .dd { margin-left: 3px; }
.ln3 .dd { margin-left: 1px; }
.create { display: grid; grid-template-columns: 26px 24px; grid-template-rows: 24px 24px; place-items: center; padding-left: 2px; }
.optbar { height: 18px; flex: none; background: #e3e4e5; }

/* work */
.work { height: 364px; display: flex; flex: none; background: #e3e4e5; }
.side { width: 252px; flex: none; display: flex; flex-direction: column; }
.ph { height: 14px; background: #c6d5e3; display: flex; align-items: center; justify-content: space-between; padding: 0 4px 0 3px; color: #222; border-bottom: 1px solid #8f9aa5; flex: none; }
.i-x { width: 7px; height: 7px; }
.browser { height: 160px; flex: none; display: flex; flex-direction: column; }
.browser-body { flex: 1; min-height: 0; display: flex; background: #fff; overflow: hidden; margin-bottom: 2px; }
.tree { width: 240px; padding: 1px 0 0 7px; overflow: hidden; color: #333; }
.t-row { height: 12.200px; line-height: 12.200px; display: flex; align-items: center; white-space: nowrap; }
.t-0 { border-left: 1px dotted #bbb; }
.t-0 svg { margin: 0 3px 0 0; }
.exp { width: 7px; height: 7px; line-height: 5px; font-size: 7px; font-weight: 400; text-align: center; background: #fff; border: 1px solid #aaa; margin-left: -4px; color: #333; flex: none; }
.t-0 .exp { margin-right: 6px; }
.t-nest { border-left: 1px dotted #bbb; padding-left: 13px; }
.t-nest > .t-row { border-left: 1px dotted #bbb; }
.dash { width: 6px; height: 1px; border-top: 1px dotted #bbb; margin-right: 2px; flex: none; }
.dash-s { width: 8px; border-top: 1px dotted #bbb; flex: none; }
.dash-l { width: 10px; height: 5px; border-left: 1px dotted #bbb; border-bottom: 1px dotted #bbb; margin: -6px 0 0 11px; flex: none; }
.t-level strong { background: #e6e6e6; padding: 0 3px; font-weight: 700; }
.vs { width: 10px; display: flex; flex-direction: column; align-items: center; background: #f1f1f1; flex: none; }
.vs-a { height: 11px; line-height: 11px; font-size: 8px; color: #444; flex: none; }
.vs-t { width: 10px; background: #cdcdcd; flex: none; }
.vs-tree .vs-t { height: 33px; margin-bottom: auto; }
.vs-prop .vs-t { height: 17px; margin-bottom: auto; }
.props { flex: 1; min-height: 0; display: flex; flex-direction: column; background: #f1f1f1; }
.typesel { height: 49px; margin: 1px 2px 0; display: flex; align-items: center; background: #fff; border-bottom: 1px solid #ddd; flex: none; }
.thumb { width: 46px; height: 45px; border: 1px solid #ddd; background: #f5f5f5; display: flex; align-items: center; justify-content: center; margin-left: 1px; }
.type-name { margin-left: 3px; flex: 1; color: #555; }
.type-dd { font-size: 7px; width: 10px; }
.inst { height: 16px; display: flex; align-items: center; flex: none; padding-left: 2px; }
.combo { width: 192px; height: 14px; line-height: 13px; background: #f7f7f7; border: 1px solid #bbb; padding-left: 2px; display: flex; justify-content: space-between; color: #333; }
.chev { width: 10px; text-align: center; color: #666; font-size: 7px; line-height: 9px; }
.edittype { display: flex; align-items: center; gap: 2px; margin-left: 4px; white-space: nowrap; color: #444; }
.ptable-wrap { display: flex; height: 105px; margin: 1px 0 0 2px; flex: none; background: #fff; overflow: hidden; }
.ptable { width: 238px; }
.gr-head { height: 12px; line-height: 11px; background: #dedede; padding-left: 1px; display: flex; justify-content: space-between; padding-right: 4px; color: #333; }
.gr-c { font-size: 7px; }
.r { height: 12.100px; line-height: 11.500px; display: grid; grid-template-columns: 118px 120px; border-bottom: 1px dashed #bbb; color: #333; white-space: nowrap; }
.r > span { padding-left: 5px; overflow: hidden; }
.r > span + span { border-left: 1px dashed #bbb; padding-left: 2px; }
.r .indent { padding-left: 3px; }
.mute { color: #aaa; }
.r .active { border: 1px solid #222; line-height: 9.500px; height: 11.500px; }
.r .btn { background: linear-gradient(#f2f2f2, #dcdcdc); border: 1px solid #aaa; text-align: center; line-height: 9.500px; height: 11.500px; }
.vs-prop { height: 105px; }
.pfoot { flex: 1; display: flex; align-items: flex-start; justify-content: space-between; padding: 0 4px 0 3px; }
.link { color: #2a62b8; text-decoration: underline; line-height: 15px; }
.apply { width: 48px; height: 15px; line-height: 14px; border: 1px solid #ddd; text-align: center; color: #aaa; }

/* canvas */
.canvas { width: 665px; margin-left: 3px; flex: none; display: grid; grid-template-columns: 1fr 12px; grid-template-rows: 1fr 14px; background: #fff; border-top: 1.500px solid #555; border-left: 1.500px solid #555; border-bottom: 1px solid #ddd; }
.drawing { position: relative; overflow: hidden; background: #fff; }
.plan { width: 652px; height: 346px; position: absolute; left: -.500px; top: -.500px; }
.brown { fill: #5f3d31; stroke: #2d1d16; stroke-width: .4; }
.gray { fill: #808080; stroke: #555; stroke-width: .4; }
.viewctl { position: absolute; top: 6px; right: 3px; display: flex; align-items: center; gap: 4px; }
.vc-min { width: 8px; height: 3px; background: #ccc; border: 1px solid #777; border-radius: 1px; }
.vc-max { width: 7px; height: 8px; border: 1px solid #777; background: #e5e5e5; }
.i-x2 { width: 7px; height: 7px; opacity: .65; }
.navbar { position: absolute; top: 21px; right: 1px; width: 23px; height: 77px; border: 1px solid #bbb; border-radius: 4px; background: #f8f8f8; display: flex; flex-direction: column; align-items: center; padding-top: 2px; }
.nav-dot { width: 5px; height: 5px; border-radius: 50%; background: #ccc; align-self: flex-end; margin-right: 2px; flex: none; }
.nav-end { margin-top: auto; margin-bottom: 2px; }
.nav-wheel { position: relative; height: 20px; width: 20px; margin-top: 4px; }
.nav-wheel em { position: absolute; right: 0; bottom: 0; font-size: 6px; font-style: normal; color: #6aa5d6; font-weight: 700; }
.nav-sep { width: 17px; height: 1px; background: #ccc; margin: 2px 0 5px; flex: none; }
.navbar .dd { margin: 3px 0; color: #888; }
.vscroll { background: #f0f0f0; display: flex; flex-direction: column; align-items: center; }
.vsc-a { height: 10px; font-size: 8px; line-height: 11px; color: #444; }
.vsc-t { width: 12px; height: 12px; background: #cdcdcd; margin: 158px 0 auto; flex: none; }
.viewbar { display: flex; align-items: center; background: #f0f0f0; gap: 2px; padding-left: 16px; }
.scale { width: 33px; }
.hs { flex: 1; display: flex; align-items: center; margin-left: 2px; padding-right: 3px; }
.hs-a { font-size: 11px; line-height: 10px; width: 8px; text-align: center; color: #333; }
.hs-t { width: 11px; height: 12px; background: #cdcdcd; margin: 0 auto 0 208px; }
.corner { background: #f0f0f0; }

/* status */
.status { height: 15px; flex: none; display: flex; align-items: center; background: #e9e9e9; border-top: 1px solid #ccc; color: #333; }
.st-text { width: 287px; padding-left: 2px; white-space: nowrap; flex: none; }
.st-combo { height: 14px; background: #fff; display: flex; justify-content: space-between; align-items: center; color: #999; padding-left: 2px; flex: none; }
.st-c1 { width: 138px; margin-left: 5px; justify-content: flex-end; }
.st-c2 { width: 103px; margin-left: 5px; }
.st-c1 + svg { margin: 0 2px; }
.st-zero { width: 15px; }
.st-d { margin-left: 6px; margin-right: 6px; }
.st-right { margin-left: auto; display: flex; align-items: center; gap: 6px; padding-right: 42px; }
.st-right .st-f6 { margin-left: -3px; }
.st-right span { margin-left: -5px; }

/* taskbar */
.taskbar { flex: 1; min-height: 0; background: #364c62; display: flex; align-items: stretch; color: #e8edf2; }
.tb-start { width: 33px; display: flex; align-items: center; justify-content: center; flex: none; }
.tb { width: 41.800px; display: flex; align-items: center; justify-content: center; flex: none; border: 1px solid transparent; }
.tb.on { background: #50657a; border-color: #60748a; }
.tb.cur { background: linear-gradient(#8a9bac, #aab6c2); border-color: #9aa8b6; }
.indd { width: 19px; height: 19px; background: #4a0b31; border: 1.500px solid #d6228b; color: #f06cb3; font-size: 9px; font-weight: 700; line-height: 16px; text-align: center; }
.wordi { display: flex; align-items: center; width: 22px; height: 20px; }
.w-l { width: 12px; height: 20px; background: #2a5ba8; color: #fff; font-size: 9px; font-weight: 700; line-height: 20px; text-align: center; }
.w-r { width: 9px; height: 17px; background: repeating-linear-gradient(#fff 0 2px, #5c7088 2px 3px); }
.tray { margin-left: auto; display: flex; align-items: center; gap: 5px; padding-right: 10px; }
.tr-up { font-size: 7px; margin-right: 3px; }
.por { margin: 0 2px 0 4px; }
.clock { display: flex; flex-direction: column; align-items: center; line-height: 12px; font-size: 8.300px; width: 44px; }
```
